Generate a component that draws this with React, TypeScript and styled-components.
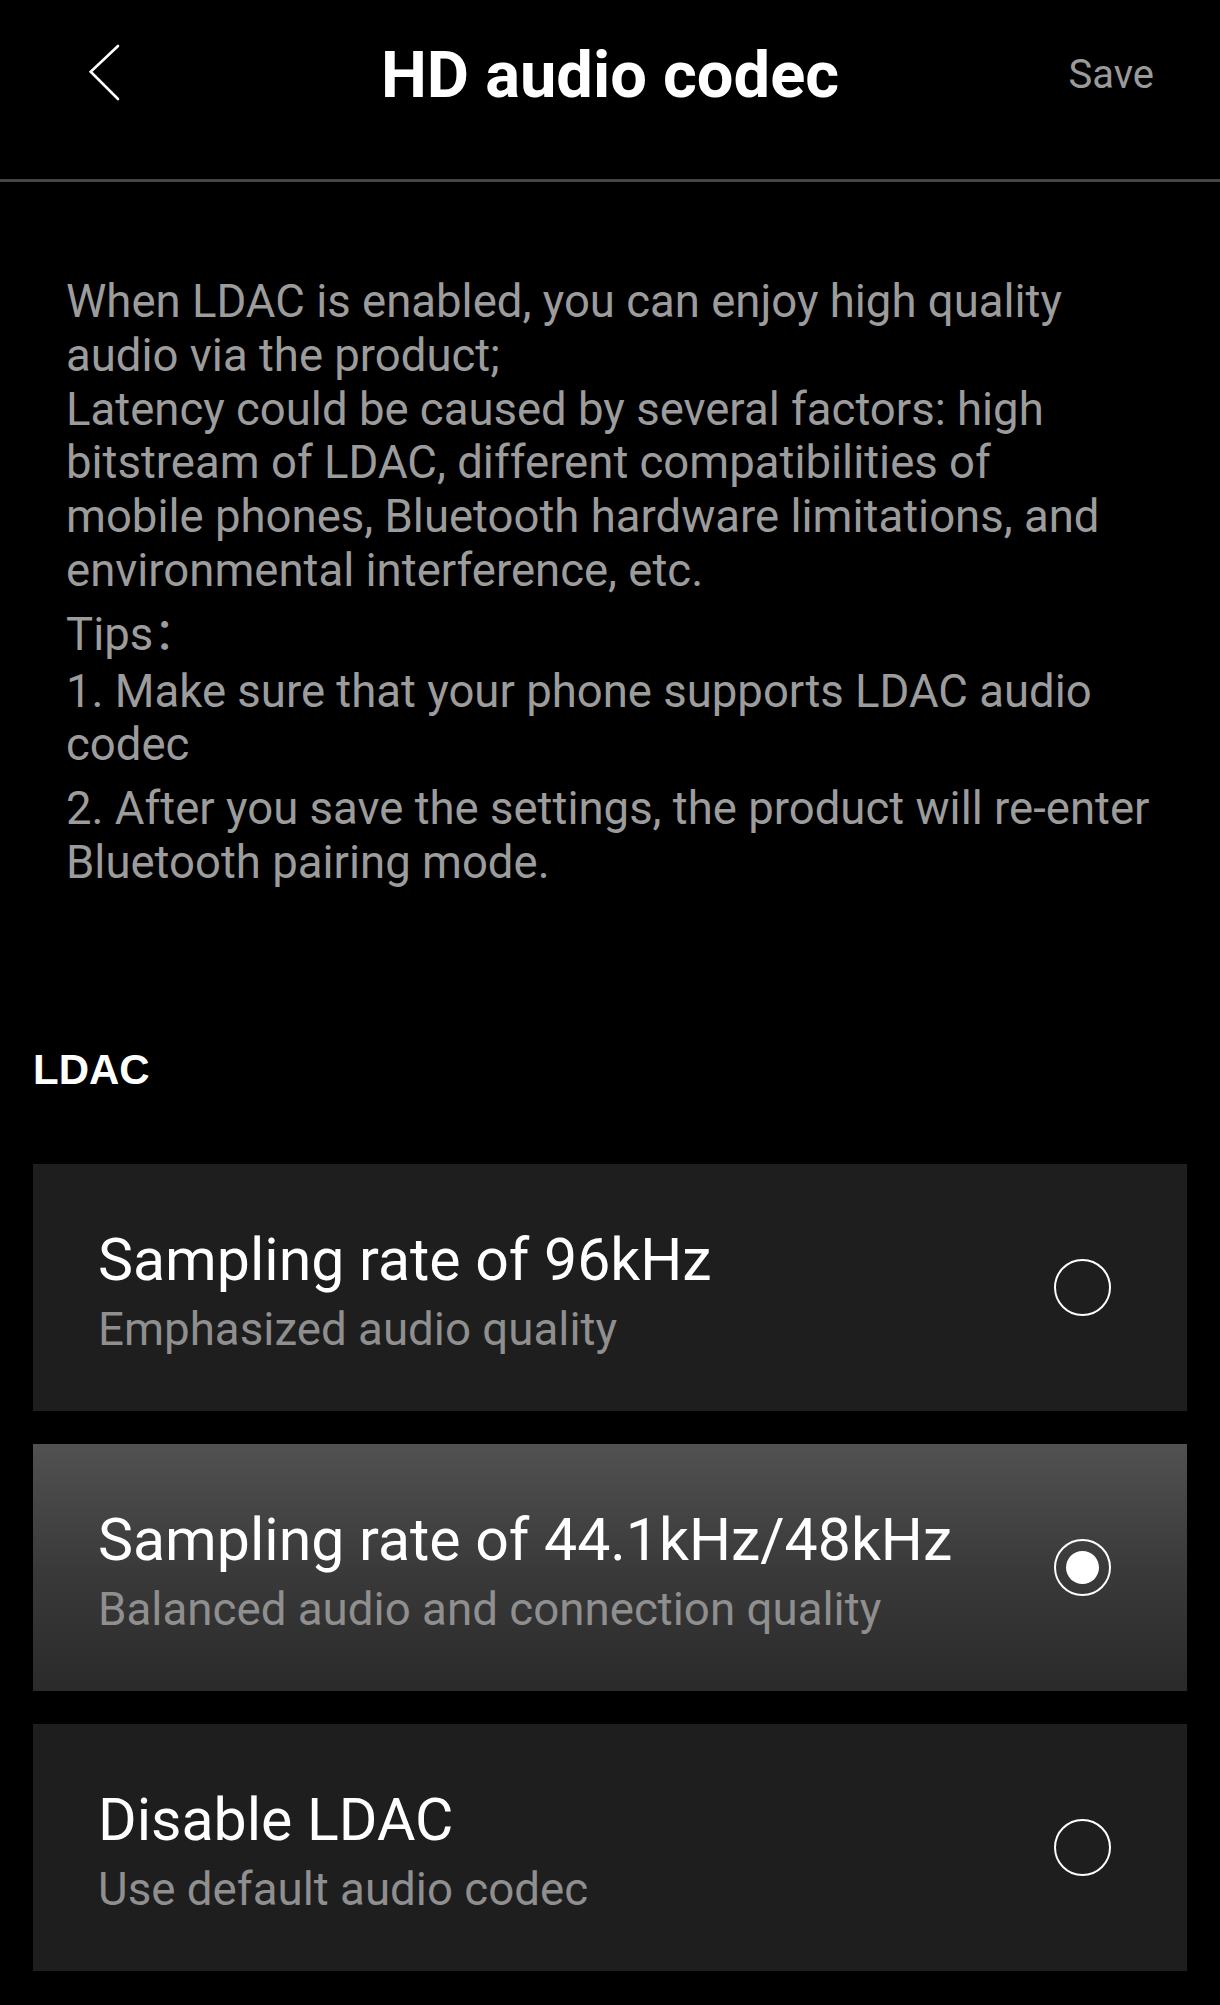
import React from "react";
import styled, { createGlobalStyle } from "styled-components";

const GlobalStyle = createGlobalStyle`
  html, body {
    margin: 0;
    padding: 0;
    background: #000000;
  }
  body {
    font-family: Roboto, "Noto Sans", "Noto Sans CJK SC", sans-serif;
    -webkit-font-smoothing: antialiased;
  }
  * { box-sizing: border-box; }
`;

const Page = styled.div`
  width: 1220px;
  min-height: 2005px;
  background: #000000;
  display: flex;
  flex-direction: column;
`;

const Header = styled.header`
  height: 182px;
  padding-bottom: 30px;
  border-bottom: 3px solid #454545;
  display: grid;
  grid-template-columns: 1fr auto 1fr;
  align-items: center;
`;

const BackButton = styled.button`
  justify-self: start;
  margin-left: 86px;
  width: 40px;
  height: 64px;
  padding: 0;
  border: none;
  background: transparent;
  display: flex;
  cursor: pointer;
`;

const Title = styled.h1`
  margin: 0;
  font-family: Roboto, sans-serif;
  font-weight: 700;
  font-size: 65px;
  line-height: 76px;
  color: #ffffff;
  letter-spacing: 0;
`;

const SaveButton = styled.button`
  justify-self: end;
  margin-right: 66px;
  padding: 0;
  border: none;
  background: transparent;
  font-family: Roboto, sans-serif;
  font-size: 40px;
  line-height: 46px;
  color: #9a9a9a;
  cursor: pointer;
`;

const Intro = styled.section`
  padding: 93px 58px 0 66px;
  display: flex;
  flex-direction: column;
`;

const Para = styled.p<{ $after: number }>`
  margin: 0 0 ${(p) => p.$after}px 0;
  font-family: Roboto, "Noto Sans CJK SC", sans-serif;
  font-size: 45.5px;
  line-height: 53.8px;
  color: #9c9c9c;
`;

const SectionLabel = styled.h2`
  margin: 155px 0 0 0;
  padding: 0 33px;
  font-family: "Liberation Sans", Arial, sans-serif;
  font-weight: 700;
  font-size: 42px;
  line-height: 50px;
  color: #ffffff;
`;

const OptionList = styled.div`
  margin-top: 69px;
  padding: 0 33px;
  display: flex;
  flex-direction: column;
  gap: 33px;
`;

const Option = styled.div<{ $selected: boolean }>`
  height: 247px;
  padding: 0 76px 0 65px;
  display: flex;
  align-items: center;
  justify-content: space-between;
  background: ${(p) =>
    p.$selected
      ? "linear-gradient(180deg, #515151 0%, #3a3a3a 50%, #2a2a2a 100%)"
      : "#1e1e1e"};
  cursor: pointer;
`;

const OptionText = styled.div`
  margin-top: 9px;
  display: flex;
  flex-direction: column;
  gap: 8px;
`;

const OptionTitle = styled.div`
  font-family: Roboto, sans-serif;
  font-size: 59px;
  line-height: 68px;
  color: #ffffff;
`;

const OptionSub = styled.div`
  font-family: Roboto, sans-serif;
  font-size: 45.7px;
  line-height: 56px;
  color: #8f8f8f;
`;

const Radio = styled.div<{ $checked: boolean }>`
  flex: none;
  width: 57px;
  height: 57px;
  border-radius: 50%;
  border: 2.5px solid #ffffff;
  display: flex;
  align-items: center;
  justify-content: center;

  &::after {
    content: "";
    width: 33px;
    height: 33px;
    border-radius: 50%;
    background: #ffffff;
    display: ${(p) => (p.$checked ? "block" : "none")};
  }
`;

const options = [
  {
    title: "Sampling rate of 96kHz",
    sub: "Emphasized audio quality",
    selected: false,
  },
  {
    title: "Sampling rate of 44.1kHz/48kHz",
    sub: "Balanced audio and connection quality",
    selected: true,
  },
  {
    title: "Disable LDAC",
    sub: "Use default audio codec",
    selected: false,
  },
];

export default function App() {
  return (
    <Page>
      <GlobalStyle />
      <Header>
        <BackButton aria-label="Back">
          <svg width="40" height="64" viewBox="0 0 40 64" fill="none">
            <path
              d="M32 3 L4.7 28.7 L32 56"
              stroke="#ffffff"
              strokeWidth="2.6"
              strokeLinecap="round"
              strokeLinejoin="miter"
            />
          </svg>
        </BackButton>
        <Title>HD audio codec</Title>
        <SaveButton>Save</SaveButton>
      </Header>

      <Intro>
        <Para $after={10}>
          When LDAC is enabled, you can enjoy high quality audio via the product;
          <br />
          Latency could be caused by several factors: high bitstream of LDAC,
          different compatibilities of
          <br />
          mobile phones, Bluetooth hardware limitations, and environmental
          interference, etc.
        </Para>
        <Para $after={3}>Tips：</Para>
        <Para $after={10}>
          1. Make sure that your phone supports LDAC audio codec
        </Para>
        <Para $after={0}>
          2. After you save the settings, the product will re-enter Bluetooth
          pairing mode.
        </Para>
      </Intro>

      <SectionLabel>LDAC</SectionLabel>

      <OptionList>
        {options.map((o) => (
          <Option key={o.title} $selected={o.selected}>
            <OptionText>
              <OptionTitle>{o.title}</OptionTitle>
              <OptionSub>{o.sub}</OptionSub>
            </OptionText>
            <Radio $checked={o.selected} />
          </Option>
        ))}
      </OptionList>
    </Page>
  );
}
